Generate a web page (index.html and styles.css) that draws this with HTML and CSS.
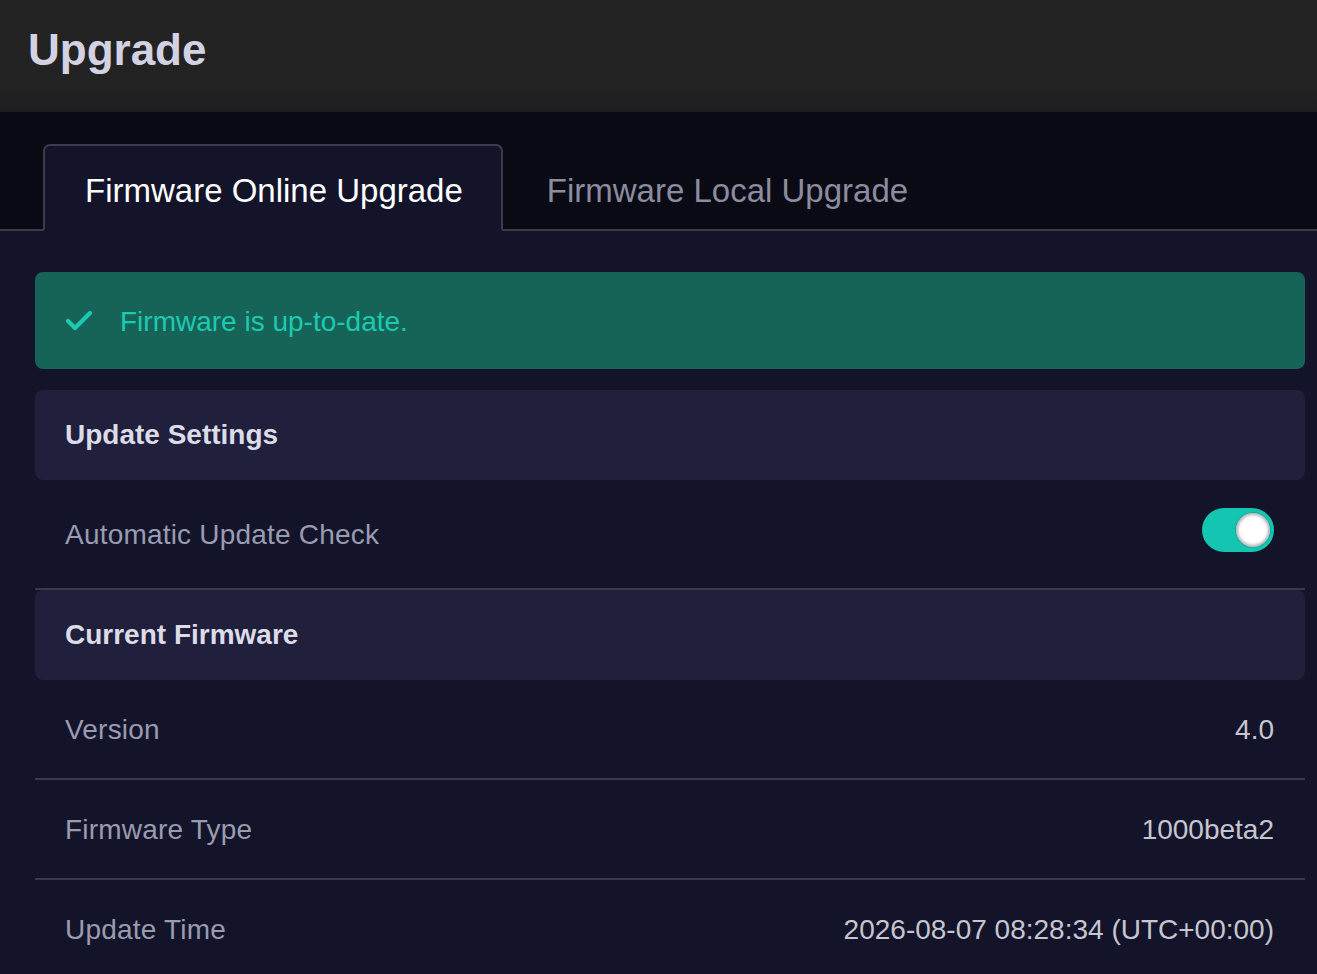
FILE: index.html
```html
<!DOCTYPE html>
<html lang="en">
<head>
<meta charset="utf-8">
<title>Upgrade</title>
<link rel="stylesheet" href="styles.css">
</head>
<body>
  <header class="page-header">
    <h1 class="page-title">Upgrade</h1>
  </header>

  <nav class="tabs">
    <div class="tab tab-active">Firmware Online Upgrade</div>
    <div class="tab">Firmware Local Upgrade</div>
    <div class="tabs-rest"></div>
  </nav>

  <main class="content">
    <div class="alert">
      <svg class="alert-icon" width="28" height="22" viewBox="0 0 28 22" aria-hidden="true">
        <polyline points="3,11 10,18 25,3" fill="none" stroke="#1ccab1" stroke-width="4.2" stroke-linecap="round" stroke-linejoin="round"/>
      </svg>
      <span class="alert-text">Firmware is up-to-date.</span>
    </div>

    <section class="group">
      <div class="group-title">Update Settings</div>
      <div class="row row-toggle">
        <span class="label">Automatic Update Check</span>
        <span class="switch switch-on"><span class="knob"></span></span>
      </div>
    </section>

    <section class="group">
      <div class="group-title">Current Firmware</div>
      <div class="row">
        <span class="label">Version</span>
        <span class="value">4.0</span>
      </div>
      <div class="row">
        <span class="label">Firmware Type</span>
        <span class="value">1000beta2</span>
      </div>
      <div class="row">
        <span class="label">Update Time</span>
        <span class="value">2026-08-07 08:28:34 (UTC+00:00)</span>
      </div>
    </section>
  </main>
</body>
</html>
```

FILE: styles.css
```css
* {
  box-sizing: border-box;
}

html, body {
  margin: 0;
  padding: 0;
  background: #13142a;
  font-family: "Liberation Sans", Arial, Helvetica, sans-serif;
}

/* Page header */
.page-header {
  height: 112px;
  padding: 28px 28px 0;
  background: linear-gradient(to bottom, #232323 0%, #222222 78%, #1d1d21 100%);
}

.page-title {
  margin: 0;
  font-size: 44px;
  line-height: 44px;
  font-weight: 700;
  color: #d2d2e2;
}

/* Tab strip */
.tabs {
  display: flex;
  align-items: flex-end;
  padding: 32px 0 0 43px;
  background: #0a0a14;
  border-bottom: 2px solid #3b3c47;
  height: 119px;
}

.tab {
  font-size: 33px;
  line-height: 33px;
  padding: 30px 40px 22px 44px;
  color: #8b8ca0;
  margin-bottom: -2px;
  border-bottom: 2px solid #3b3c47;
}

.tab-active {
  color: #ffffff;
  background: #13142a;
  border: 2px solid #3b3c47;
  border-bottom: 2px solid #13142a;
  border-radius: 7px 7px 0 0;
  padding: 28px 38px 22px 40px;
}

.tabs-rest {
  flex: 1;
}

/* Content */
.content {
  padding: 41px 12px 0 35px;
}

.alert {
  display: flex;
  align-items: center;
  height: 97px;
  padding: 3px 30px 0;
  border-radius: 8px;
  background: #166358;
}

.alert-icon {
  flex: none;
  margin-right: 27px;
  margin-top: -3px;
}

.alert-text {
  font-size: 28px;
  color: #1ccab1;
}

.group {
  margin-top: 21px;
}

.group + .group {
  margin-top: 0;
}

.group-title {
  display: flex;
  align-items: center;
  height: 90px;
  padding: 0 30px;
  border-radius: 8px;
  background: #201f3c;
  font-size: 28px;
  font-weight: 700;
  color: #dcdce8;
}

.row {
  display: flex;
  align-items: center;
  justify-content: space-between;
  height: 100px;
  padding: 2px 31px 0 30px;
  border-bottom: 2px solid #393a45;
  font-size: 28px;
}

.row-toggle {
  height: 110px;
  padding-top: 2px;
}

.label {
  color: #9a9bb0;
  letter-spacing: 0.2px;
}

.value {
  color: #c6c6d0;
}

/* Switch */
.switch {
  position: relative;
  display: inline-block;
  width: 72px;
  height: 44px;
  border-radius: 22px;
  background: #3a3b4a;
  margin-top: -10px;
}

.switch-on {
  background: #14c6b1;
}

.knob {
  position: absolute;
  top: 5px;
  right: 4px;
  width: 34px;
  height: 34px;
  border-radius: 50%;
  background: #ffffff;
  box-shadow: inset 0 0 3px 2px rgba(120, 120, 130, 0.55), 0 0 2px rgba(0, 0, 0, 0.4);
}
```
